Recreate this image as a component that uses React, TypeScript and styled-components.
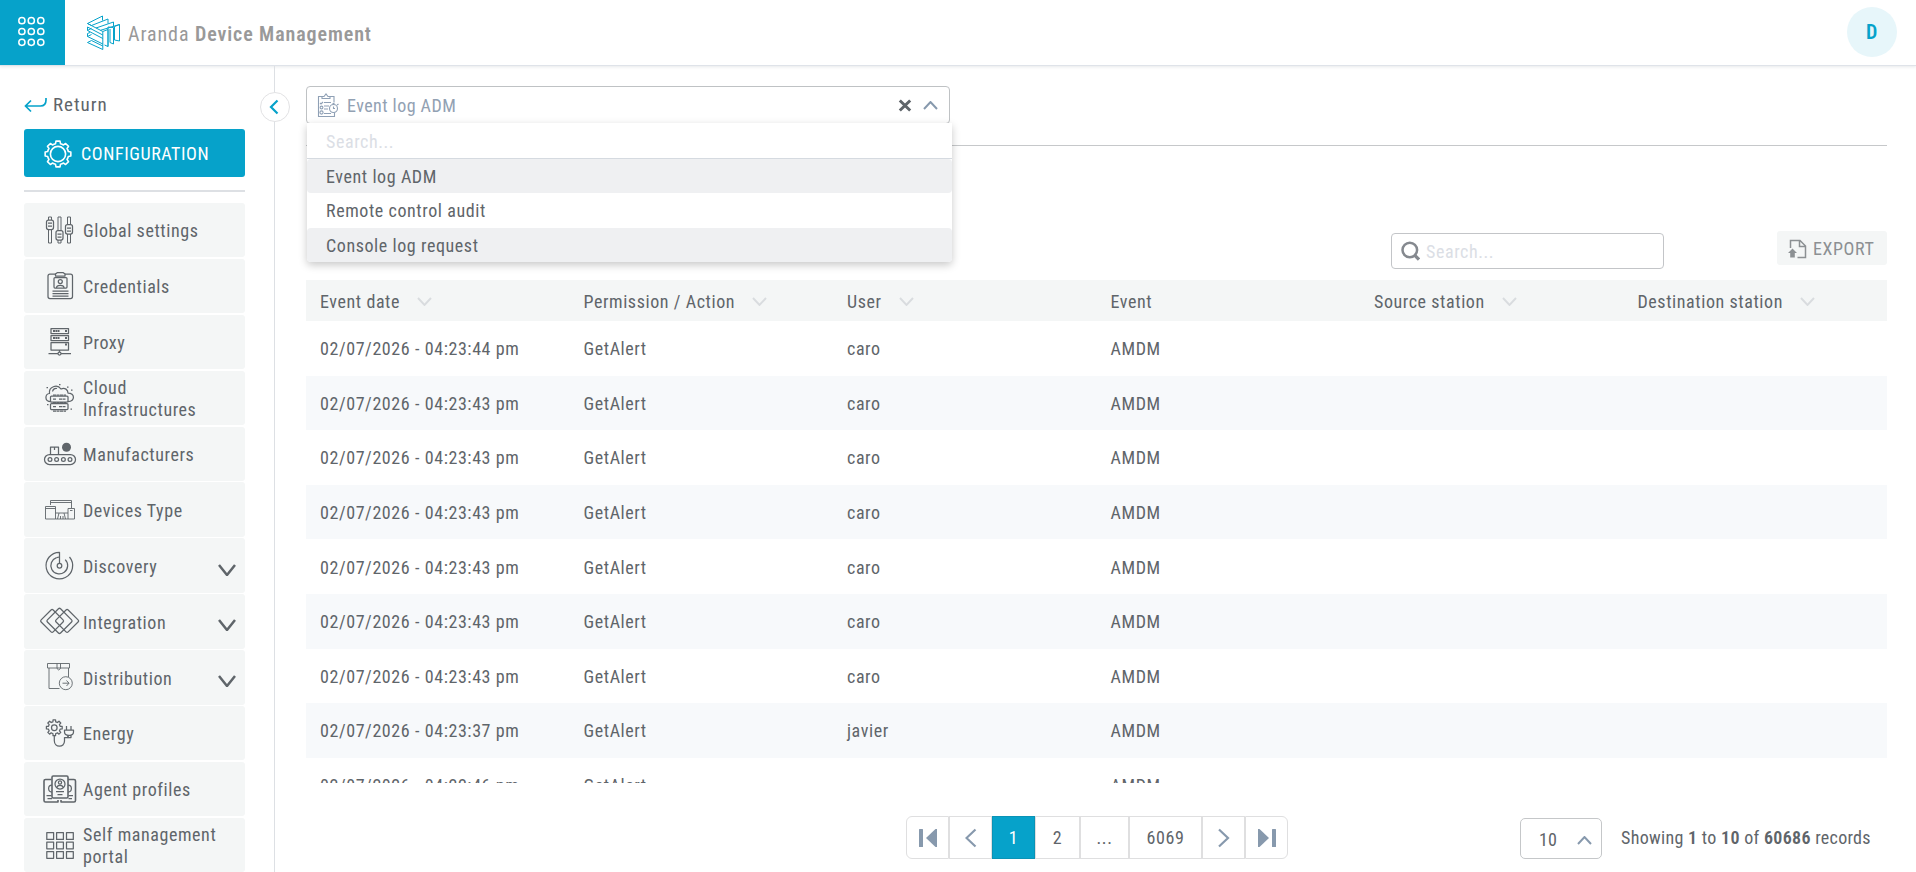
import React from "react";
import styled, { createGlobalStyle } from "styled-components";

const colors = {
  brand: "#06a2ca",
  text: "#5f656a",
  muted: "#8c9093",
  placeholder: "#dbdee5",
  steel: "#8799ad",
  line: "#dde0e4",
  panel: "#f4f6f6",
};

const GlobalStyle = createGlobalStyle`
  * { box-sizing: border-box; }
  body {
    margin: 0;
    background: #fff;
    color: ${colors.text};
    font: 400 18px/22px "Roboto Condensed", Roboto, "Liberation Sans", sans-serif;
    font-stretch: 75%;
    letter-spacing: 0.58px;
    overflow: hidden;
  }
  input, button { font: inherit; letter-spacing: inherit; color: inherit; }
  svg { display: block; flex: none; }
`;

const Page = styled.div`
  display: flex;
  flex-direction: column;
  height: 872px;
  overflow: hidden;
`;

const Header = styled.header`
  display: flex;
  align-items: center;
  height: 66px;
  flex: none;
  border-bottom: 1px solid #dfe3e9;
  box-shadow: 0 1px 3px rgba(60, 70, 90, 0.12);
  position: relative;
`;

const AppsButton = styled.button`
  display: flex;
  width: 65px;
  height: 65px;
  padding: 0;
  border: 0;
  background: ${colors.brand};
`;

const Brand = styled.div`
  display: flex;
  align-items: center;
  margin-left: 21px;
  gap: 7px;
`;

const BrandName = styled.div`
  color: #999;
  font-size: 20px;
  font-weight: 400;
  letter-spacing: 0.9px;
  padding-top: 2px;
  strong { font-weight: 600; }
`;

const Avatar = styled.div`
  display: flex;
  align-items: center;
  justify-content: center;
  width: 50px;
  height: 50px;
  margin: 0 19px 2px auto;
  border-radius: 50%;
  background: #e7f6fa;
  color: ${colors.brand};
  font-size: 20px;
  font-weight: 600;
`;

const Body = styled.div`
  display: flex;
  flex: 1;
  min-height: 0;
`;

const Sidebar = styled.aside`
  position: relative;
  width: 275px;
  flex: none;
  border-right: 1px solid ${colors.line};
  padding: 28px 29px 0 24px;
`;

const CollapseButton = styled.button`
  position: absolute;
  top: 26px;
  right: -16px;
  width: 30px;
  height: 30px;
  padding: 0;
  border: 1px solid #e2e2e4;
  border-radius: 50%;
  background: #fff;
`;

const ReturnLink = styled.div`
  display: flex;
  align-items: center;
  gap: 5px;
  height: 22px;
  font-size: 19px;
  letter-spacing: 1px;
`;

const ConfigButton = styled.div`
  display: flex;
  align-items: center;
  gap: 9px;
  height: 48px;
  margin-top: 13px;
  padding: 2px 0 0 20px;
  border-radius: 3px;
  background: ${colors.brand};
  color: #fff;
`;

const Divider = styled.div`
  height: 2px;
  margin: 13px 0 11px;
  background: ${colors.line};
`;

const Menu = styled.nav`
  display: flex;
  flex-direction: column;
  gap: 1.5px;
`;

const MenuItem = styled.div`
  display: flex;
  align-items: center;
  height: 54.4px;
  padding: 0 9px 0 15px;
  border-radius: 3px;
  background: ${colors.panel};
`;

const MenuLabel = styled.span`
  flex: 1;
  margin-left: 3px;
  padding-top: 2.5px;
`;

const MenuChevron = styled.span`
  padding-top: 8px;
`;

const Main = styled.main`
  position: relative;
  display: flex;
  flex-direction: column;
  flex: 1;
  padding: 20px 29px 13px 31px;
`;

const SelectRow = styled.div`
  height: 60px;
  border-bottom: 1px solid #c6c8ca;
`;

const SelectWrap = styled.div`
  position: relative;
  width: 644px;
`;

const SelectBox = styled.div`
  display: flex;
  align-items: center;
  height: 38px;
  padding: 0 11px 0 10px;
  border: 1px solid #bfc2c4;
  border-radius: 4px;
  color: #92a1b3;
`;

const SelectValue = styled.span`
  flex: 1;
  margin: 2px 0 0 8px;
  letter-spacing: 0.45px;
`;

const SelectIcons = styled.span`
  display: flex;
  align-items: center;
  gap: 11px;
`;

const Dropdown = styled.div`
  position: absolute;
  z-index: 2;
  top: 37px;
  left: 1px;
  width: 645px;
  border-radius: 0 0 4px 4px;
  background: #fff;
  box-shadow: 0 3px 8px rgba(0, 0, 0, 0.22);
`;

const DropdownSearch = styled.input`
  display: block;
  width: 100%;
  height: 36px;
  padding: 2px 19px 0;
  border: 0;
  border-bottom: 1px solid #d5dae0;
  background: transparent;
  outline: 0;
  &::placeholder { color: ${colors.placeholder}; opacity: 1; }
`;

const Option = styled.div<{ $shaded?: boolean }>`
  display: flex;
  align-items: center;
  height: 34.3px;
  padding: 2px 19px 0;
  border-radius: 4px;
  background: ${(p) => (p.$shaded ? "#eff0f2" : "#fff")};
`;

const Toolbar = styled.div`
  display: flex;
  justify-content: flex-end;
  align-items: flex-start;
  gap: 113px;
  height: 49px;
  margin-top: 85px;
`;

const SearchField = styled.label`
  display: flex;
  align-items: center;
  gap: 6px;
  width: 273px;
  height: 36px;
  margin-top: 2px;
  padding: 0 9px;
  border: 1px solid #c3c5c8;
  border-radius: 4px;
`;

const SearchInput = styled.input`
  width: 200px;
  padding: 2px 0 0;
  border: 0;
  outline: 0;
  background: transparent;
  &::placeholder { color: ${colors.placeholder}; opacity: 1; }
`;

const ExportButton = styled.button`
  display: flex;
  align-items: center;
  gap: 6px;
  width: 110px;
  height: 34px;
  padding: 1px 0 0 11px;
  border: 0;
  border-radius: 3px;
  background: ${colors.panel};
  color: ${colors.muted};
`;

const TableRow = styled.div<{ $striped?: boolean }>`
  display: grid;
  grid-template-columns: repeat(6, 1fr);
  align-items: center;
  height: 54.6px;
  background: ${(p) => (p.$striped ? "#f7f9fb" : "transparent")};
`;

const TableHead = styled(TableRow)`
  height: 41px;
  flex: none;
  background: ${colors.panel};
`;

const TableBody = styled.div`
  height: 462px;
  flex: none;
  overflow: hidden;
`;

const Cell = styled.div`
  display: flex;
  align-items: center;
  gap: 17px;
  padding: 2px 0 0 14px;
  white-space: nowrap;
`;

const Footer = styled.footer`
  display: flex;
  align-items: flex-end;
  margin-top: auto;
  padding-left: 600px;
`;

const Pagination = styled.div`
  display: flex;
`;

const PageButton = styled.div<{ $w?: number; $active?: boolean }>`
  display: flex;
  align-items: center;
  justify-content: center;
  width: ${(p) => p.$w ?? 43}px;
  height: 43px;
  border: 1px solid ${(p) => (p.$active ? "#0a93b6" : "#dfdfe0")};
  background: ${(p) => (p.$active ? colors.brand : "#fff")};
  color: ${(p) => (p.$active ? "#fff" : colors.text)};
  &:first-child { border-radius: 6px 0 0 6px; }
  &:last-child { border-radius: 0 6px 6px 0; }
`;

const PageSize = styled.div`
  display: flex;
  align-items: center;
  justify-content: space-between;
  width: 82px;
  height: 41px;
  margin-left: 232px;
  padding: 3px 9px 0 18px;
  border: 1px solid #c5c7c9;
  border-radius: 5px;
  letter-spacing: 0;
`;

const Summary = styled.div`
  margin: 0 0 10px 19px;
  letter-spacing: 0.3px;
  white-space: nowrap;
  strong { font-weight: 600; }
`;

type ChevronProps = { dir: "up" | "down"; color: string; w?: number; h?: number; stroke?: number };

function Chevron({ dir, color, w = 14, h = 8, stroke = 1.8 }: ChevronProps) {
  const d = dir === "down" ? `M1 1L${w / 2} ${h - 1}L${w - 1} 1` : `M1 ${h - 1}L${w / 2} 1L${w - 1} ${h - 1}`;
  return (
    <svg width={w} height={h} fill="none" stroke={color} strokeWidth={stroke}>
      <path d={d} />
    </svg>
  );
}

function gearPath(cx: number, cy: number, outer: number, inner: number, teeth: number) {
  const step = (Math.PI * 2) / teeth;
  const point = (r: number, a: number) => `${(cx + r * Math.sin(a)).toFixed(2)} ${(cy - r * Math.cos(a)).toFixed(2)}`;
  let d = "";
  for (let i = 0; i < teeth; i++) {
    const a = i * step;
    d += `${i ? "L" : "M"}${point(outer, a - step * 0.2)}L${point(outer, a + step * 0.2)}`;
    d += `L${point(inner, a + step * 0.3)}A${inner} ${inner} 0 0 1 ${point(inner, a + step * 0.7)}`;
  }
  return d + "Z";
}

const AppsIcon = () => (
  <svg width="65" height="65" fill="none" stroke="#fff" strokeWidth="1.5">
    {[20.7, 31.5, 42.3].map((y) => [21.9, 31.3, 40.8].map((x) => <circle key={x + "-" + y} cx={x} cy={y} r="3.1" />))}
  </svg>
);

const Logo = () => (
  <svg width="35" height="36" fill="none" stroke={colors.brand} strokeWidth="1" strokeLinejoin="round">
    <path d="M5.500 10.500L1.500 8.500L16.500 1V5.500" />
    <path d="M1.500 8.500L16.800 16.500M5.500 10.500L22 4V8.500M10 13L27.500 7V11.500M14.500 15.300L33.500 9.500" />
    <path d="M5.500 13.300L1.500 15.500L16.800 23.500M1.500 15.500V12L16.800 20" />
    <path d="M5.500 19.500L1.500 21.500L16.800 29M1.500 21.500V18.500L4 17.500" />
    <path d="M5.500 25.500L1.500 27.500L16.800 34.500M5.500 25.500L16.800 31" />
    <path d="M16.800 34.500V16.500L22 14.500V31.500L18.500 30" />
    <path d="M22 31.500V12L27.500 12.500V29L24 27.500V14" />
    <path d="M28.500 25V11.500L33.500 9.500V26L28.500 25" />
  </svg>
);

const ReturnIcon = () => (
  <svg width="24" height="16" fill="none" stroke={colors.brand} strokeWidth="1.7">
    <path d="M1.500 9H16.500C20.500 9 22 6.500 22 3V1M7 3.500L1.500 9L7 14.500" />
  </svg>
);

const GearIcon = () => (
  <svg width="28" height="28" fill="none" stroke="#fff" strokeWidth="1.6" strokeLinejoin="round">
    <path d={gearPath(14, 14, 13, 10.6, 8)} />
    <circle cx="14" cy="14" r="7.600" />
  </svg>
);

const ClipboardIcon = () => (
  <svg width="22" height="24" fill="none" stroke="#8fa0b5" strokeWidth="1.100">
    <path d="M5 3.500H1.500V23.500H17.500V19.500M12.500 3.500H17V9.500" />
    <path d="M5 5.500V3.500H7L9 1L11 3.500H13V5.500Z" />
    <path d="M7 9.500H14M7 13H12M7 16H11M7 20.500H14M3 10L4 11L6 9" />
    <circle cx="4.500" cy="14.500" r="1.400" />
    <circle cx="4.500" cy="19.500" r="1.600" />
    <circle cx="16.500" cy="15.500" r="4" />
    <path d="M16.500 13.500V15.500H18M15.500 10.500H17.500M20 12L21.500 11" />
  </svg>
);

const ClearIcon = () => (
  <svg width="14" height="13" fill="none" stroke={colors.text} strokeWidth="3">
    <path d="M1.800 1.500L12.200 11.500M12.200 1.500L1.800 11.500" />
  </svg>
);

const MagnifierIcon = () => (
  <svg width="19" height="20" fill="none" stroke="#85898f" strokeWidth="2.500">
    <circle cx="8.800" cy="9" r="7.300" />
    <path d="M13 13.500L18 18.500" strokeWidth="3.200" />
  </svg>
);

const ExportIcon = () => (
  <svg width="19" height="20" fill="none" stroke={colors.muted} strokeWidth="1.500">
    <path d="M2.500 9V1.500H12L17.500 7V18.500H9.500M11.500 1.500V7.500H17.500" />
    <path d="M4.500 9.500L9 14H6.800V18.500H2.200V14H0Z" fill={colors.muted} stroke="none" />
  </svg>
);

const BoundaryIcon = ({ last }: { last?: boolean }) => (
  <svg width="20" height="20" fill={colors.steel} transform={last ? "scale(-1,1)" : undefined}>
    <rect x="1" y="1" width="4" height="18" rx="0.500" />
    <path d="M19 1V19H17.500L8 10L17.500 1Z" />
  </svg>
);

const StepIcon = ({ next }: { next?: boolean }) => (
  <svg width="12" height="20" fill="none" stroke={colors.steel} strokeWidth="2.200">
    <path d={next ? "M1 1.500L10 10L1 18.500" : "M10.500 1.500L1.500 10L10.500 18.500"} />
  </svg>
);

const MenuSvg = styled.svg.attrs({ viewBox: "0 0 41 32", width: 41, height: 32, fill: "none", stroke: "#5f656a", strokeLinejoin: "round" })<{ $thin?: boolean }>`
  stroke-width: ${(p) => (p.$thin ? 0.9 : 1.25)}px;
`;

const icons: Record<string, React.ReactNode> = {
  sliders: (
    <MenuSvg>
      <path d="M9.500 6V3H12.500V6M9.500 15V29H12.500V15M19 17V3H22V17M19 26V29H22V26M28.500 10V3H31.500V10M28.500 20V29H31.500V20" strokeWidth="1" />
      <rect x="7.500" y="6" width="7" height="9.500" rx="2" />
      <rect x="17" y="16.500" width="7" height="9.500" rx="2" />
      <rect x="26.500" y="10.500" width="7" height="9.500" rx="2" />
      <path d="M9 9H13M9 12H13M18.500 20H22.500M18.500 23H22.500M28 14H32M28 17H32" />
    </MenuSvg>
  ),
  credentials: (
    <MenuSvg>
      <rect x="9" y="4" width="24.500" height="24.500" rx="2" />
      <path d="M16.500 4V6H26V4L24 2.500H18.500Z" fill={colors.panel} />
      <rect x="15" y="7.500" width="13" height="10.500" rx="1" />
      <circle cx="21.300" cy="11.500" r="2" />
      <path d="M17.500 18C17.500 14.500 25 14.500 25 18M13.500 21H29.500M13.500 23.500H29.500M13.500 26H29.500" />
    </MenuSvg>
  ),
  server: (
    <MenuSvg>
      <rect x="12" y="2.500" width="17.500" height="5" />
      <rect x="12" y="9.500" width="17.500" height="5" />
      <rect x="12" y="16.500" width="17.500" height="7.500" />
      <path d="M14 5H20.500M26 5H28M14 12H20.500M26 12H28M26 18.500H28" strokeWidth="2" strokeDasharray="2 .4" />
      <path d="M20.500 24V26M9.500 27.500H19M22 27.500H32" />
      <circle cx="20.500" cy="27.500" r="1.500" />
    </MenuSvg>
  ),
  cloud: (
    <MenuSvg>
      <path d="M12 19.500C5 19.500 6 12 10.500 11.500C9.500 5 18 1.500 22 7C26 5 29 8 29 11C36 11 36.500 19.500 29 19.500" />
      <path d="M13.500 9.500C14 7 16 6 18 6.500M7.500 5.500H9M20 2.500H21.500M28 5H29.500M32 8H33.500M8 22.500H9.500M31.500 27H33" />
      <rect x="11.500" y="14" width="17.500" height="6" rx="1" fill={colors.panel} />
      <rect x="11.500" y="21.500" width="17.500" height="6" rx="1" fill={colors.panel} />
      <path d="M14 17H17M20 17H27M14 24.500H17M20 24.500H27M14 20.700H27M14 29H27M14 13H27" strokeDasharray="3 .5" />
    </MenuSvg>
  ),
  conveyor: (
    <MenuSvg>
      <rect x="5.500" y="16.500" width="31" height="10" rx="5" />
      {[11, 17.600, 24.400, 31].map((x) => <circle key={x} cx={x} cy="21.500" r="1.900" />)}
      <path d="M11.500 16.500V9H19.500V16.500M15.500 9V12" />
      <circle cx="27.500" cy="9.300" r="4.500" fill="#5f656a" stroke="none" />
    </MenuSvg>
  ),
  devices: (
    <MenuSvg $thin>
      <path d="M6.500 12.500H16.500V25H6.500ZM6.500 14.500H16.500M11.500 11V6.500H32.500V14M11.500 8.500H32.500M16.500 19H29M29 14.500H35.500V25H29ZM31 16.500H33.500M20 19L18.500 25M25 19L26.500 25M16.500 25H29M21.500 22V25M24 22V25" />
    </MenuSvg>
  ),
  radar: (
    <MenuSvg>
      <path d="M20.500 13V2.300A13.300 13.300 0 1 0 30.500 7" />
      <path d="M17.500 7.600A8.400 8.400 0 1 0 26.200 9.600" />
      <path d="M17.500 7.600L20.500 7" />
      <circle cx="20.500" cy="15.700" r="2.300" />
    </MenuSvg>
  ),
  diamonds: (
    <MenuSvg>
      <rect x="4.600" y="7.400" width="17" height="17" rx="1.500" transform="rotate(45 13.100 15.900)" />
      <rect x="11.200" y="6.600" width="18.600" height="18.600" rx="1.500" transform="rotate(45 20.500 15.900)" />
      <rect x="19.600" y="7.400" width="17" height="17" rx="1.500" transform="rotate(45 28.100 15.900)" />
    </MenuSvg>
  ),
  parcel: (
    <MenuSvg $thin>
      <path d="M8.500 2.500H30.500V7H8.500ZM10 7V27.500H20.500M29.500 7V16M18 2.500V7.500L19.700 9L21.500 7.500V2.500" />
      <circle cx="26.800" cy="22.200" r="6.500" />
      <path d="M23.500 22.200H30M27.500 19.500L30 22.200L27.500 25" />
    </MenuSvg>
  ),
  energy: (
    <MenuSvg>
      <path d={gearPath(15.300, 10.700, 8, 6, 8)} />
      <circle cx="15.300" cy="10.700" r="2.800" />
      <path d="M15.300 19V23.500C15.300 31 25.500 31 25.500 24V20.500H29V18" />
      <path d="M25.500 13H34.500V15C34.500 19.500 25.500 19.500 25.500 15ZM27.500 13V9M32 13V9M29 18V20.500H32V17.500" />
    </MenuSvg>
  ),
  profiles: (
    <MenuSvg>
      <path d="M12.500 6.500H6.500Q5 6.500 5 8V27.500Q5 29 6.500 29H19V27M29 6.500H35Q36.500 6.500 36.500 8V27.500Q36.500 29 35 29H22V27" strokeWidth="1.600" />
      <rect x="13" y="3" width="16" height="22" rx="1.200" strokeWidth="1.600" />
      <circle cx="21" cy="11" r="5" />
      <circle cx="21" cy="9.500" r="1.600" />
      <path d="M18 14.500C18 11.500 24 11.500 24 14.500M17 18.500H25M18.500 21.500H23.500M13 12C8.500 12 8.500 19 13 19M29 12C33.500 12 33.500 19 29 19M7.500 22.500H12.500M29.500 22.500H34M8.500 25.500H13M29.500 25.500H33" />
    </MenuSvg>
  ),
  grid: (
    <MenuSvg>
      {[3.600, 13, 22.500].map((y) => [7.800, 17.600, 27.500].map((x) => <rect key={x + "-" + y} x={x} y={y} width="6.800" height="6.800" />))}
    </MenuSvg>
  ),
};

const menu = [
  { icon: "sliders", label: "Global settings" },
  { icon: "credentials", label: "Credentials" },
  { icon: "server", label: "Proxy" },
  { icon: "cloud", label: "Cloud Infrastructures" },
  { icon: "conveyor", label: "Manufacturers" },
  { icon: "devices", label: "Devices Type" },
  { icon: "radar", label: "Discovery", expandable: true },
  { icon: "diamonds", label: "Integration", expandable: true },
  { icon: "parcel", label: "Distribution", expandable: true },
  { icon: "energy", label: "Energy" },
  { icon: "profiles", label: "Agent profiles" },
  { icon: "grid", label: "Self management portal" },
];

const columns = [
  { title: "Event date", sortable: true },
  { title: "Permission / Action", sortable: true },
  { title: "User", sortable: true },
  { title: "Event", sortable: false },
  { title: "Source station", sortable: true },
  { title: "Destination station", sortable: true },
];

const events = [
  ["04:23:44", "caro"],
  ["04:23:43", "caro"],
  ["04:23:43", "caro"],
  ["04:23:43", "caro"],
  ["04:23:43", "caro"],
  ["04:23:43", "caro"],
  ["04:23:43", "caro"],
  ["04:23:37", "javier"],
  ["04:22:46", ""],
];

export default function App() {
  return (
    <Page>
      <GlobalStyle />
      <Header>
        <AppsButton aria-label="Applications"><AppsIcon /></AppsButton>
        <Brand>
          <Logo />
          <BrandName>Aranda <strong>Device Management</strong></BrandName>
        </Brand>
        <Avatar>D</Avatar>
      </Header>
      <Body>
        <Sidebar>
          <ReturnLink><ReturnIcon />Return</ReturnLink>
          <ConfigButton><GearIcon />CONFIGURATION</ConfigButton>
          <Divider />
          <Menu>
            {menu.map((item) => (
              <MenuItem key={item.label}>
                {icons[item.icon]}
                <MenuLabel>{item.label}</MenuLabel>
                {item.expandable && (
                  <MenuChevron><Chevron dir="down" color={colors.text} w={18} h={12} stroke={2.500} /></MenuChevron>
                )}
              </MenuItem>
            ))}
          </Menu>
          <CollapseButton aria-label="Collapse">
            <svg width="28" height="28" fill="none" stroke={colors.brand} strokeWidth="2.200">
              <path d="M16.500 7.500L10 14L16.500 20.500" />
            </svg>
          </CollapseButton>
        </Sidebar>
        <Main>
          <SelectRow>
            <SelectWrap>
              <SelectBox>
                <ClipboardIcon />
                <SelectValue>Event log ADM</SelectValue>
                <SelectIcons>
                  <ClearIcon />
                  <Chevron dir="up" color={colors.steel} w={15} h={9} stroke={2} />
                </SelectIcons>
              </SelectBox>
              <Dropdown>
                <DropdownSearch placeholder="Search..." />
                <Option $shaded>Event log ADM</Option>
                <Option>Remote control audit</Option>
                <Option $shaded>Console log request</Option>
              </Dropdown>
            </SelectWrap>
          </SelectRow>
          <Toolbar>
            <SearchField>
              <MagnifierIcon />
              <SearchInput placeholder="Search..." />
            </SearchField>
            <ExportButton><ExportIcon />EXPORT</ExportButton>
          </Toolbar>
          <TableHead>
            {columns.map((c) => (
              <Cell key={c.title}>
                {c.title}
                {c.sortable && <Chevron dir="down" color="#d9dcdf" w={15} h={9} stroke={1.900} />}
              </Cell>
            ))}
          </TableHead>
          <TableBody>
            {events.map(([time, user], i) => (
              <TableRow key={i} $striped={i % 2 === 1}>
                <Cell>02/07/2026 - {time} pm</Cell>
                <Cell>GetAlert</Cell>
                <Cell>{user}</Cell>
                <Cell>AMDM</Cell>
              </TableRow>
            ))}
          </TableBody>
          <Footer>
            <Pagination>
              <PageButton><BoundaryIcon /></PageButton>
              <PageButton><StepIcon /></PageButton>
              <PageButton $active>1</PageButton>
              <PageButton $w={45}>2</PageButton>
              <PageButton $w={49}>...</PageButton>
              <PageButton $w={73}>6069</PageButton>
              <PageButton><StepIcon next /></PageButton>
              <PageButton><BoundaryIcon last /></PageButton>
            </Pagination>
            <PageSize>10<Chevron dir="up" color={colors.steel} w={15} h={9} stroke={2} /></PageSize>
            <Summary>Showing <strong>1</strong> to <strong>10</strong> of <strong>60686</strong> records</Summary>
          </Footer>
        </Main>
      </Body>
    </Page>
  );
}
